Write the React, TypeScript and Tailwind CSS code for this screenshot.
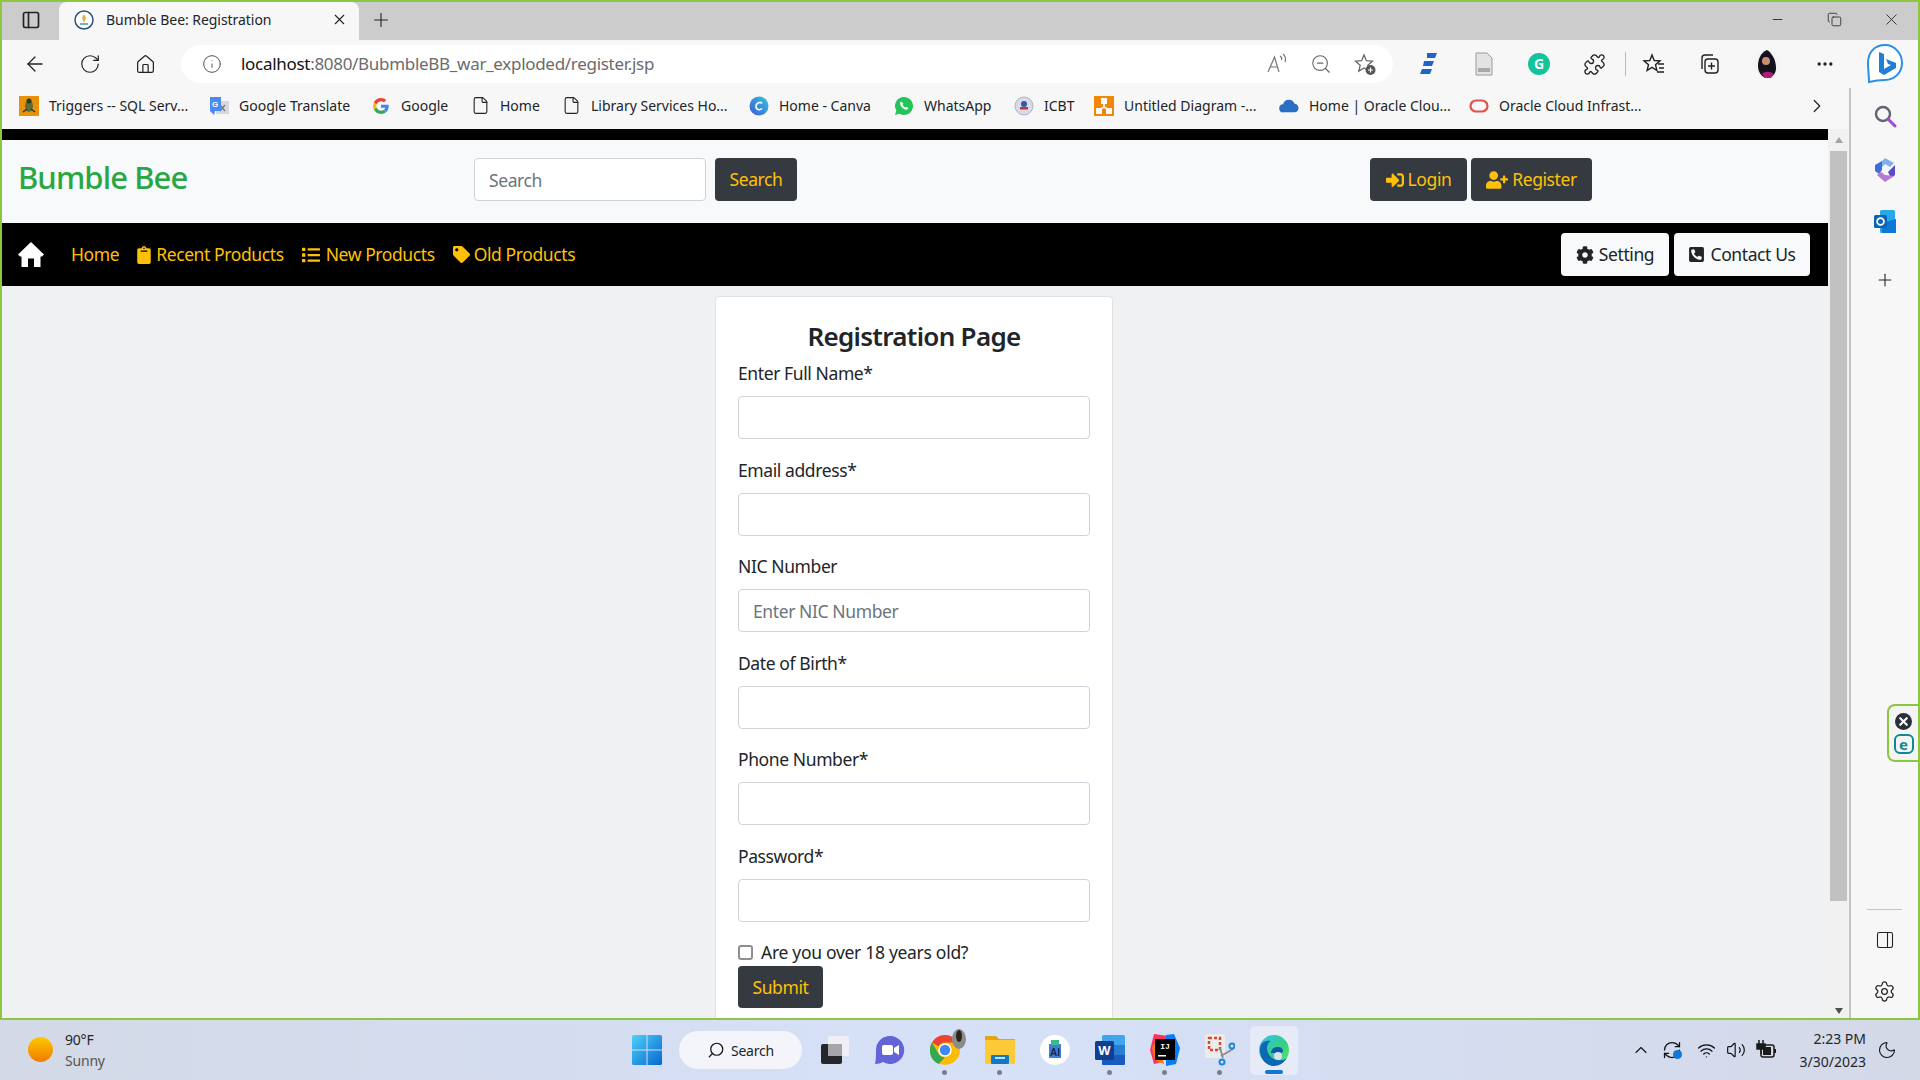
import React from 'react'
import {
  FaClipboard,
  FaList,
  FaTag,
  FaSignInAlt,
  FaUserPlus,
  FaCog,
  FaPhoneSquareAlt,
} from 'react-icons/fa'
import {
  ArrowLeft,
  RotateCw,
  Home,
  Info,
  Search,
  ZoomOut,
  Plus,
  X,
  Minus,
  ChevronRight,
  ChevronUp,
  PanelRight,
  Settings,
  MoreHorizontal,
  Puzzle,
  Wifi,
  Volume2,
  Moon,
  RefreshCw,
  File,
  PanelLeft,
  Copy,
} from 'lucide-react'

const bookmarks = [
  { label: 'Triggers -- SQL Serv...', width: 'w-[190px]', icon: <BugIcon /> },
  { label: 'Google Translate', width: 'w-[162px]', icon: <TranslateIcon /> },
  { label: 'Google', width: 'w-[99px]', icon: <GoogleIcon /> },
  { label: 'Home', width: 'w-[91px]', icon: <File size={19} strokeWidth={1.4} /> },
  { label: 'Library Services Ho...', width: 'w-[188px]', icon: <File size={19} strokeWidth={1.4} /> },
  { label: 'Home - Canva', width: 'w-[145px]', icon: <CanvaIcon /> },
  { label: 'WhatsApp', width: 'w-[120px]', icon: <WhatsAppIcon /> },
  { label: 'ICBT', width: 'w-[80px]', icon: <IcbtIcon /> },
  { label: 'Untitled Diagram -...', width: 'w-[185px]', icon: <DiagramIcon /> },
  { label: 'Home | Oracle Clou...', width: 'w-[190px]', icon: <CloudIcon /> },
  { label: 'Oracle Cloud Infrast...', width: 'w-[170px]', icon: <OracleIcon /> },
]

const fields = [
  { label: 'Enter Full Name*', placeholder: '' },
  { label: 'Email address*', placeholder: '' },
  { label: 'NIC Number', placeholder: 'Enter NIC Number' },
  { label: 'Date of Birth*', placeholder: '' },
  { label: 'Phone Number*', placeholder: '' },
  { label: 'Password*', placeholder: '' },
]

function BugIcon() {
  return (
    <svg width="20" height="20" viewBox="0 0 20 20">
      <rect width="20" height="20" fill="#e8920c" />
      <ellipse cx="10" cy="10" rx="4" ry="6" fill="#5c6b3a" />
      <circle cx="10" cy="5" r="2.5" fill="#2e3a22" />
      <path d="M4 16l4-3M16 16l-4-3" stroke="#2e3a22" strokeWidth="1.5" />
    </svg>
  )
}

function TranslateIcon() {
  return (
    <svg width="20" height="20" viewBox="0 0 20 20">
      <rect x="7" y="5" width="13" height="13" fill="#d5d8dc" />
      <path d="M11 9l5 6M16 9l-5 6" stroke="#70757a" strokeWidth="1.2" />
      <path d="M1 1h11v14H6l-1 4-4-4z" fill="#4a8af4" />
      <text x="6" y="11" fontSize="8" fill="#fff" textAnchor="middle" fontFamily="Liberation Sans" fontWeight="700">G</text>
    </svg>
  )
}

function GoogleIcon() {
  return (
    <svg width="16" height="16" viewBox="0 0 48 48">
      <path fill="#EA4335" d="M24 9.5c3.5 0 6.700 1.200 9.200 3.600l6.900-6.900C35.900 2.400 30.400 0 24 0 14.600 0 6.500 5.400 2.600 13.200l8 6.200C12.500 13.700 17.800 9.500 24 9.500z" />
      <path fill="#4285F4" d="M47 24.500c0-1.600-.1-3.100-.4-4.500H24v9h13c-.6 3-2.300 5.500-4.800 7.200l7.700 6C44.300 38.100 47 31.800 47 24.500z" />
      <path fill="#FBBC05" d="M10.500 28.600c-.5-1.400-.8-3-.8-4.600s.3-3.200.8-4.600l-8-6.200C.9 16.500 0 20.100 0 24s.9 7.500 2.600 10.800z" />
      <path fill="#34A853" d="M24 48c6.500 0 11.900-2.100 15.900-5.800l-7.700-6c-2.200 1.500-5 2.300-8.200 2.300-6.200 0-11.500-4.200-13.400-9.900l-8 6.200C6.500 42.600 14.600 48 24 48z" />
    </svg>
  )
}

function CanvaIcon() {
  return (
    <svg width="20" height="20" viewBox="0 0 20 20">
      <defs>
        <linearGradient id="canva" x1="0" y1="1" x2="1" y2="0">
          <stop offset="0" stopColor="#3a5bd9" />
          <stop offset="1" stopColor="#38c6d9" />
        </linearGradient>
      </defs>
      <circle cx="10" cy="10" r="9.500" fill="url(#canva)" />
      <path d="M13 7.500c-1-2-6-1-6 3 0 3.500 4 4 6 2" fill="none" stroke="#fff" strokeWidth="1.600" />
    </svg>
  )
}

function WhatsAppIcon() {
  return (
    <svg width="20" height="20" viewBox="0 0 20 20">
      <path d="M10 1a9 9 0 00-7.700 13.600L1 19l4.500-1.200A9 9 0 1010 1z" fill="#25c45a" />
      <path d="M7 5.500c-1 .7-1.300 2-.6 3.500 1 2 2.700 3.700 4.700 4.500 1.500.6 2.700 0 3.300-1.200l-2-1.500-1 .8c-1.200-.6-2.200-1.600-2.800-2.800l.8-1z" fill="#fff" />
    </svg>
  )
}

function IcbtIcon() {
  return (
    <svg width="20" height="20" viewBox="0 0 20 20">
      <circle cx="10" cy="10" r="9" fill="#d7dce6" stroke="#a9b3c6" />
      <circle cx="10" cy="8" r="3" fill="#3c55a5" />
      <rect x="6" y="11" width="8" height="2.500" fill="#c8343b" />
    </svg>
  )
}

function DiagramIcon() {
  return (
    <svg width="20" height="20" viewBox="0 0 20 20">
      <rect width="20" height="20" fill="#f08705" />
      <path d="M10 7v4M10 11l-5 3M10 11l5 3" stroke="#fff" strokeWidth="1.500" />
      <rect x="7" y="2" width="6" height="6" fill="#fff" />
      <rect x="2" y="12" width="6" height="6" fill="#fff" />
      <rect x="12" y="12" width="6" height="6" fill="#fff" />
    </svg>
  )
}

function CloudIcon() {
  return (
    <svg width="22" height="16" viewBox="0 0 22 16">
      <path d="M5 15a4.500 4.500 0 01-.5-9A6.500 6.500 0 0117 5.500 4.800 4.800 0 0117.500 15z" fill="#2a6fc4" />
    </svg>
  )
}

function OracleIcon() {
  return (
    <svg width="20" height="14" viewBox="0 0 20 14">
      <rect x="1.500" y="1.500" width="17" height="11" rx="5.500" fill="none" stroke="#e0524a" strokeWidth="2.200" />
    </svg>
  )
}

function HouseIcon() {
  return (
    <svg width="26" height="25" viewBox="0 0 26 25">
      <path d="M13 0L26 12.500 24 14.500H22.500V25H16V16.500H10V25H3.500V14.500H2L0 12.500z" fill="#fff" />
    </svg>
  )
}

function BingIcon() {
  return (
    <svg width="40" height="42" viewBox="0 0 40 42">
      <path d="M20 2C10 2 3 9 3 20c0 6 1 13 1 19 4-1 8-2 16-2 10 0 17-8 17-17S30 2 20 2z" fill="#fff" stroke="#2b8fe8" strokeWidth="2" />
      <path d="M14 9l5 2v15l7-4-3-1-2-5 10 4v5l-12 7-5-3z" fill="#1f7fd6" />
    </svg>
  )
}

function ExtensionE() {
  return (
    <svg width="20" height="24" viewBox="0 0 20 24">
      <path d="M8 1h10l-2 5H8zM5 9h10l-2 5H4zM3 17h10l-2 5H1z" fill="#1f64c8" />
    </svg>
  )
}

function ReaderIcon() {
  return (
    <svg width="20" height="24" viewBox="0 0 20 24">
      <path d="M2 1h11l5 5v17H2z" fill="#e3e3e3" stroke="#9a9a9a" />
      <rect x="4" y="16" width="12" height="4" fill="#a8a8a8" />
    </svg>
  )
}

function GrammarlyIcon() {
  return (
    <div className="flex h-[22px] w-[22px] items-center justify-center rounded-full bg-[#15c39a] text-[14px] font-bold leading-none text-white">
      G
    </div>
  )
}

function FavListIcon() {
  return (
    <svg width="24" height="24" viewBox="0 0 24 24" fill="none" stroke="#222" strokeWidth="1.400">
      <path d="M10 3l2.200 5.500 5.800.4-4.500 3.800 1.400 5.800L10 15.400l-4.900 3.100 1.400-5.800L2 8.900l5.800-.4z" />
      <path d="M16 12h6M17 16h5M15 20h7" />
    </svg>
  )
}

function CollectionsIcon() {
  return (
    <svg width="24" height="24" viewBox="0 0 24 24" fill="none" stroke="#222" strokeWidth="1.400">
      <path d="M5 17V6a3 3 0 013-3h8" />
      <rect x="8" y="7" width="13" height="14" rx="3" />
      <path d="M14.500 10.500v7M11 14h7" />
    </svg>
  )
}

function AvatarIcon() {
  return (
    <svg width="28" height="28" viewBox="0 0 28 28">
      <circle cx="14" cy="14" r="14" fill="#f4f4f4" />
      <path d="M14 0c-7 3-9 10-9 16 0 6 4 12 9 12s9-4 9-10C23 10 19 3 14 0z" fill="#14121c" />
      <circle cx="13" cy="11" r="4" fill="#c98f76" />
      <path d="M9 24c2-3 8-3 12 0l-3 4h-6z" fill="#b01a7a" />
    </svg>
  )
}

function ReadAloudIcon() {
  return (
    <svg width="24" height="24" viewBox="0 0 24 24" fill="none" stroke="#777" strokeWidth="1.200">
      <path d="M3 20L9.500 5 14 20M5.500 15h6.500" />
      <path d="M15 4c1.500 1 2 2.500 1.500 4M18 2c2.500 2 3 5 2 8" />
    </svg>
  )
}

function FavAddIcon() {
  return (
    <svg width="24" height="24" viewBox="0 0 24 24">
      <path d="M11 3l2.400 5.700 6 .5-4.600 4 1.400 5.900L11 16l-5.200 3.100 1.400-5.900-4.600-4 6-.5z" fill="none" stroke="#666" strokeWidth="1.300" />
      <circle cx="17.500" cy="18" r="5" fill="#555" />
      <path d="M17.500 15.500v5M15 18h5" stroke="#fff" strokeWidth="1.200" />
    </svg>
  )
}

function SideSearchIcon() {
  return (
    <svg width="24" height="24" viewBox="0 0 24 24" fill="none">
      <circle cx="10" cy="10" r="7" stroke="#5f6670" strokeWidth="2.400" />
      <path d="M15 15l7 7" stroke="#a24ad0" strokeWidth="3" strokeLinecap="round" />
    </svg>
  )
}

function CopilotIcon() {
  return (
    <svg width="22" height="26" viewBox="0 0 22 26">
      <path d="M11 1l9 5-4 4-5-3-3 3V4z" fill="#7fb0ec" />
      <path d="M1 8l7-4v9l-3 4-4-3z" fill="#3c6fd8" />
      <path d="M21 8v10l-4 3-3-6z" fill="#5a4cc4" />
      <path d="M3 18l8 7 9-6-9-1-4-3z" fill="#b57ad6" />
      <circle cx="11" cy="13" r="3" fill="#f7f7f7" />
    </svg>
  )
}

function OutlookIcon() {
  return (
    <svg width="22" height="26" viewBox="0 0 22 26">
      <rect x="6" y="1" width="15" height="23" rx="1.500" fill="#28a8ea" />
      <path d="M8 14l14-4v14H8z" fill="#0f78d4" />
      <rect x="0" y="6" width="13" height="13" rx="1.500" fill="#0a64b8" />
      <circle cx="6.500" cy="12.500" r="3.400" fill="none" stroke="#fff" strokeWidth="1.800" />
    </svg>
  )
}

function EsetIcon() {
  return (
    <div className="absolute right-0 top-[616px] flex h-[58px] w-[31px] flex-col items-center gap-[4px] rounded-l-[8px] border-2 border-r-0 border-[#8dc63f] bg-[#f4f4f4] pt-[7px]">
      <div className="flex h-[17px] w-[17px] items-center justify-center rounded-full bg-[#2b2f3a]">
        <X size={13} strokeWidth={4} color="#fff" />
      </div>
      <div className="flex h-[20px] w-[20px] items-center justify-center rounded-[6px] border-2 border-[#0f8a94] text-[15px] font-bold leading-none text-[#0f8a94]">
        e
      </div>
    </div>
  )
}

function WinLogo() {
  return (
    <svg width="30" height="30" viewBox="0 0 30 30">
      <defs>
        <linearGradient id="win" x1="0" y1="0" x2="1" y2="1">
          <stop offset="0" stopColor="#4fd0fa" />
          <stop offset="1" stopColor="#0568cf" />
        </linearGradient>
      </defs>
      <path d="M0 1.500A1.500 1.500 0 011.500 0h13v14.500H0zM15.500 0h13A1.500 1.500 0 0130 1.500v13H15.500zM0 15.500h14.500V30h-13A1.500 1.500 0 010 28.500zM15.500 15.500H30v13a1.500 1.500 0 01-1.500 1.500h-13z" fill="url(#win)" />
    </svg>
  )
}

function TaskViewIcon() {
  return (
    <svg width="30" height="30" viewBox="0 0 30 30">
      <rect x="1" y="9" width="21" height="20" rx="2" fill="#26272b" />
      <rect x="8" y="1" width="21" height="20" rx="2" fill="#f2f2f6" fillOpacity="0.9" />
      <rect x="8" y="9" width="14" height="12" fill="#a6a6a8" />
    </svg>
  )
}

function TeamsIcon() {
  return (
    <svg width="30" height="30" viewBox="0 0 30 30">
      <path d="M15 1a14 14 0 00-14 14c0 4 0 10-1 14 3 0 6-1 8-2a14 14 0 107-26z" fill="#6264d8" />
      <rect x="7" y="10" width="11" height="10" rx="2" fill="#fff" />
      <path d="M19 13l5-3v10l-5-3z" fill="#fff" />
    </svg>
  )
}

function ChromeIcon() {
  return (
    <div className="relative">
      <svg width="30" height="30" viewBox="0 0 30 30">
        <circle cx="15" cy="15" r="15" fill="#fbbc05" />
        <path d="M15 0a15 15 0 0113 7.500H15a7.500 7.500 0 00-6.500 3.750L2 7.500A15 15 0 0115 0z" fill="#ea4335" />
        <path d="M2 7.500l6.500 11.250A7.500 7.500 0 0015 22.500L8.500 29A15 15 0 012 7.500z" fill="#34a853" />
        <circle cx="15" cy="15" r="6" fill="#4285f4" stroke="#fff" strokeWidth="1.500" />
      </svg>
      <svg className="absolute -right-[8px] -top-[6px]" width="18" height="20" viewBox="0 0 18 20">
        <ellipse cx="9" cy="10" rx="7" ry="10" fill="#8b8b8b" />
        <ellipse cx="9" cy="7" rx="3" ry="6" fill="#2b2320" />
      </svg>
    </div>
  )
}

function FolderIcon() {
  return (
    <svg width="30" height="30" viewBox="0 0 30 30">
      <path d="M0 2a1 1 0 011-1h10l3 3h15a1 1 0 011 1v3H0z" fill="#e5a50e" />
      <rect y="5" width="30" height="24" rx="1" fill="#fdc936" />
      <rect x="6" y="20" width="18" height="9" rx="1" fill="#0f7ac8" />
      <rect x="10" y="22" width="10" height="2" fill="#bde0f5" />
    </svg>
  )
}

function AiBadgeIcon() {
  return (
    <svg width="30" height="30" viewBox="0 0 30 30">
      <circle cx="15" cy="15" r="15" fill="#fff" />
      <path d="M9 9h12v14H9z" fill="#3f7fd9" />
      <path d="M11 5h8v5h-8z" fill="#3eb98b" />
      <text x="15" y="21" fontSize="10" fill="#16273f" textAnchor="middle" fontFamily="Liberation Sans" fontWeight="700">AI</text>
    </svg>
  )
}

function WordIcon() {
  return (
    <svg width="30" height="30" viewBox="0 0 30 30">
      <rect x="7" y="0" width="23" height="30" rx="1.500" fill="#41a5ee" />
      <rect x="7" y="10" width="23" height="10" fill="#2b7cd3" />
      <path d="M7 20h23v8.500a1.500 1.500 0 01-1.500 1.500h-20A1.500 1.500 0 017 28.500z" fill="#185abd" />
      <rect x="0" y="6" width="19" height="19" rx="1.500" fill="#103f91" />
      <text x="9.500" y="20" fontSize="13" fill="#fff" textAnchor="middle" fontFamily="Liberation Sans" fontWeight="700">W</text>
    </svg>
  )
}

function IntelliJIcon() {
  return (
    <svg width="30" height="32" viewBox="0 0 30 32">
      <path d="M4 0l14 2-6 26-8 2-4-14z" fill="#fe315d" />
      <path d="M16 1l8-1 6 14-4 16-10 2z" fill="#087cfa" />
      <path d="M2 14l6-10 6 26-9-4z" fill="#f97a12" />
      <rect x="5" y="5" width="20" height="21" fill="#000" />
      <text x="15" y="15" fontSize="8" fill="#fff" textAnchor="middle" fontFamily="Liberation Mono" fontWeight="700">IJ</text>
      <rect x="8" y="21" width="8" height="1.500" fill="#fff" />
    </svg>
  )
}

function SnipIcon() {
  return (
    <svg width="30" height="32" viewBox="0 0 30 32">
      <rect x="0" y="0" width="20" height="24" rx="2" fill="#ececec" />
      <rect x="4" y="4" width="11" height="12" fill="none" stroke="#d6482b" strokeWidth="2.500" strokeDasharray="3 2" />
      <path d="M15 14l3 10M28 15l-12 7" stroke="#8a8a8a" strokeWidth="1.800" />
      <circle cx="27" cy="12" r="2.500" fill="none" stroke="#1e88d8" strokeWidth="2" />
      <circle cx="17" cy="28" r="2.500" fill="none" stroke="#1e88d8" strokeWidth="2" />
    </svg>
  )
}

function EdgeIcon() {
  return (
    <svg width="30" height="32" viewBox="0 0 30 32">
      <defs>
        <linearGradient id="edge1" x1="0" y1="0" x2="1" y2="1">
          <stop offset="0" stopColor="#35c1f1" />
          <stop offset="0.600" stopColor="#36d07e" />
          <stop offset="1" stopColor="#66eb6e" />
        </linearGradient>
      </defs>
      <circle cx="15" cy="16" r="15" fill="url(#edge1)" />
      <path d="M1 16C1 8 7 6 12 7c-6 3-5 12 1 17 5 3 11 3 15 0-3 5-8 8-13 8C7 32 1 25 1 16z" fill="#0c67b5" />
      <path d="M12 19c0-4 3-6 7-6 3 0 5 2 5 4 0 1-1 2-3 2h-9z" fill="#0b5aa5" />
      <circle cx="19" cy="22" r="4" fill="#d9e0f2" />
    </svg>
  )
}

function BatteryIcon() {
  return (
    <svg width="20" height="22" viewBox="0 0 20 22">
      <rect x="5" y="6" width="13" height="12" rx="2" fill="none" stroke="#1a1a1a" strokeWidth="1.500" />
      <rect x="7" y="8" width="8" height="8" fill="#1a1a1a" />
      <rect x="18" y="10" width="2" height="4" fill="#1a1a1a" />
      <path d="M3 1v4M7 1v4M1 5h8v5H1zM5 10v5" stroke="#1a1a1a" strokeWidth="1.500" fill="#1a1a1a" />
    </svg>
  )
}

function TaskbarSlot({ children, dot }: { children: React.ReactNode; dot?: boolean }) {
  return (
    <div className="relative flex h-[49px] w-[55px] items-center justify-center">
      {children}
      {dot && <span className="absolute bottom-0 h-[5px] w-[5px] rounded-full bg-[#7b7f88]" />}
    </div>
  )
}

export default function App() {
  return (
    <div className="flex h-[1080px] w-[1920px] flex-col overflow-hidden font-['Noto_Sans',sans-serif] text-[#212529]">
      <div className="flex h-[1020px] flex-col border-2 border-[#8dc63f]">
        {/* tab strip */}
        <div className="flex h-[38px] shrink-0 items-end bg-[#cccccc]">
          <div className="flex h-[38px] w-[57px] items-center justify-center pb-[3px]">
            <PanelLeft size={20} strokeWidth={2} color="#222" />
          </div>
          <div className="flex h-[38px] w-[300px] items-center rounded-t-[8px] bg-[#f7f7f7] pb-[3px] pl-[15px] pr-[11px]">
            <svg width="20" height="20" viewBox="0 0 20 20">
              <circle cx="10" cy="10" r="9" fill="#fff" stroke="#30527a" strokeWidth="1.500" />
              <path d="M10 4l2 4-2 5-2-5z" fill="#d9b53a" />
              <path d="M6 14h8" stroke="#3aa0a8" strokeWidth="1.500" />
            </svg>
            <span className="ml-[12px] flex-1 text-[14px] tracking-[-0.05px]">Bumble Bee: Registration</span>
            <X size={17} strokeWidth={1.6} color="#222" />
          </div>
          <div className="flex h-[38px] w-[44px] items-center justify-center pb-[3px]">
            <Plus size={22} strokeWidth={1.2} color="#222" />
          </div>
          <div className="ml-auto flex h-[38px] items-center pb-[3px] pr-[17px]">
            <Minus size={15} strokeWidth={1.4} color="#222" />
            <Copy size={15} strokeWidth={1.3} color="#222" className="ml-[42px]" />
            <X size={19} strokeWidth={1.1} color="#222" className="ml-[40px]" />
          </div>
        </div>

        {/* toolbar */}
        <div className="flex h-[48px] shrink-0 items-center bg-[#f7f7f7]">
          <div className="flex w-[179px] items-center pl-[21px]">
            <ArrowLeft size={24} strokeWidth={1.3} color="#222" />
            <RotateCw size={22} strokeWidth={1.3} color="#222" className="ml-[32px]" />
            <Home size={21} strokeWidth={1.4} color="#222" className="ml-[34px]" />
          </div>
          <div className="flex h-[38px] w-[1212px] items-center rounded-full bg-white pl-[21px] pr-[16px]">
            <Info size={20} strokeWidth={1.2} color="#555" />
            <div className="ml-[19px] text-[17px] tracking-[-0.3px] text-[#6b6b6b]">
              <span className="text-[#111]">localhost</span>:8080/BubmbleBB_war_exploded/register.jsp
            </div>
            <div className="ml-auto flex items-center gap-[21px]">
              <ReadAloudIcon />
              <ZoomOut size={22} strokeWidth={1.2} color="#666" />
              <FavAddIcon />
            </div>
          </div>
          <div className="flex flex-1 items-center pl-[26px]">
            <ExtensionE />
            <div className="ml-[35px]"><ReaderIcon /></div>
            <div className="ml-[34px]"><GrammarlyIcon /></div>
            <Puzzle size={23} strokeWidth={1.4} color="#222" className="ml-[33px]" />
            <div className="ml-[19px] h-[24px] w-px bg-[#bbb]" />
            <div className="ml-[16px]"><FavListIcon /></div>
            <div className="ml-[31px]"><CollectionsIcon /></div>
            <div className="ml-[32px]"><AvatarIcon /></div>
            <MoreHorizontal size={20} strokeWidth={2} color="#222" className="ml-[34px]" />
            <div className="ml-[30px]"><BingIcon /></div>
          </div>
        </div>

        <div className="flex min-h-0 flex-1">
          <div className="flex min-w-0 flex-1 flex-col">
            {/* bookmarks bar */}
            <div className="flex h-[41px] shrink-0 items-center bg-[#f7f7f7] pb-[6px] pl-[17px] pr-[21px] text-[14px]">
              {bookmarks.map((b) => (
                <div key={b.label} className={`flex shrink-0 items-center ${b.width}`}>
                  <span className="flex w-[20px] shrink-0 justify-center">{b.icon}</span>
                  <span className="ml-[10px] whitespace-nowrap">{b.label}</span>
                </div>
              ))}
              <ChevronRight size={22} strokeWidth={1.3} color="#222" className="ml-auto" />
            </div>

            <div className="flex min-h-0 flex-1">
              <div className="flex min-w-0 flex-1 flex-col bg-[#eff1f3]">
                <div className="h-[11px] shrink-0 bg-black" />

                {/* navbar */}
                <div className="flex h-[83px] shrink-0 items-center bg-[#f8f9fa] pb-[4px] pl-[16px] pr-[236px]">
                  <div className="w-[456px] pb-[4px] text-[31px] font-medium tracking-[-0.9px] text-[#28a745]">Bumble Bee</div>
                  <input
                    placeholder="Search"
                    className="h-[43px] w-[232px] rounded-[4px] border border-[#ced4da] bg-white px-[14px] text-[17.5px] tracking-[-0.4px] outline-none placeholder:text-[#6c757d]"
                  />
                  <button className="ml-[9px] h-[43px] w-[82px] rounded-[4px] bg-[#343a40] text-[17.5px] tracking-[-0.4px] text-[#ffc107]">Search</button>
                  <div className="ml-auto flex gap-[4px]">
                    <button className="flex h-[43px] w-[97px] items-center justify-center gap-[4px] rounded-[4px] bg-[#343a40] text-[17.5px] tracking-[-0.4px] text-[#ffc107]">
                      <FaSignInAlt size={18} />
                      Login
                    </button>
                    <button className="flex h-[43px] w-[121px] items-center justify-center gap-[4px] rounded-[4px] bg-[#343a40] text-[17.5px] tracking-[-0.4px] text-[#ffc107]">
                      <FaUserPlus size={22} />
                      Register
                    </button>
                  </div>
                </div>

                {/* nav links */}
                <div className="flex h-[63px] shrink-0 items-center bg-black pl-[16px] pr-[18px] text-[17.5px] tracking-[-0.4px] text-[#ffc107]">
                  <HouseIcon />
                  <span className="ml-[27px]">Home</span>
                  <span className="ml-[16px] flex items-center gap-[3px]">
                    <FaClipboard size={18} />
                    Recent Products
                  </span>
                  <span className="ml-[18px] flex items-center gap-[6px]">
                    <FaList size={18} />
                    New Products
                  </span>
                  <span className="ml-[18px] flex items-center gap-[4px]">
                    <FaTag size={17} />
                    Old Products
                  </span>
                  <div className="ml-auto flex gap-[5px] text-[#212529]">
                    <button className="flex h-[43px] w-[108px] items-center justify-center gap-[5px] rounded-[4px] bg-[#f8f9fa]">
                      <FaCog size={18} />
                      Setting
                    </button>
                    <button className="flex h-[43px] w-[136px] items-center justify-center gap-[5px] rounded-[4px] bg-[#f8f9fa]">
                      <FaPhoneSquareAlt size={17} />
                      Contact Us
                    </button>
                  </div>
                </div>

                {/* register card */}
                <main className="flex min-h-0 flex-1 justify-center overflow-hidden pr-[2px] pt-[10px]">
                  <div className="h-[760px] w-[398px] shrink-0 rounded-[4px] border border-[#dfe1e3] bg-white px-[22px] pt-[20px]">
                    <h3 className="mb-[5px] text-center text-[26px] font-semibold leading-[38px] tracking-[-0.7px]">Registration Page</h3>
                    {fields.map((f) => (
                      <div key={f.label} className="mb-[17.5px]">
                        <label className="mb-[9px] block text-[17.5px] leading-[27px] tracking-[-0.4px]">{f.label}</label>
                        <input
                          placeholder={f.placeholder}
                          className="block h-[43px] w-full rounded-[4px] border border-[#ced4da] bg-white px-[14px] text-[17.5px] tracking-[-0.4px] outline-none placeholder:text-[#6c757d]"
                        />
                      </div>
                    ))}
                    <div className="flex h-[27px] items-center">
                      <input type="checkbox" className="h-[15px] w-[15px] appearance-none rounded-[3px] border-2 border-[#8f8f8f] bg-white" />
                      <label className="ml-[8px] text-[17.5px] leading-[27px] tracking-[-0.3px]">Are you over 18 years old?</label>
                    </div>
                    <button className="h-[42px] w-[85px] rounded-[4px] bg-[#343a40] text-[17.5px] tracking-[-0.4px] text-[#ffc107]">Submit</button>
                  </div>
                </main>
              </div>

              {/* scrollbar */}
              <div className="flex w-[21px] shrink-0 flex-col items-center bg-[#f1f1f1]">
                <div className="mt-[8px] h-0 w-0 border-x-[4px] border-b-[6px] border-x-transparent border-b-[#a3a3a3]" />
                <div className="mt-[8px] h-[750px] w-[17px] bg-[#c1c1c1]" />
                <div className="mb-[4px] mt-auto h-0 w-0 border-x-[4px] border-t-[6px] border-x-transparent border-t-[#505050]" />
              </div>
            </div>
          </div>

          {/* side panel */}
          <div className="relative flex w-[69px] shrink-0 flex-col items-center border-l-2 border-[#c4c4c4] bg-[#f7f7f7] pt-[16px]">
            <SideSearchIcon />
            <div className="mt-[29px]"><CopilotIcon /></div>
            <div className="mt-[26px]"><OutlookIcon /></div>
            <Plus size={20} strokeWidth={1.3} color="#222" className="mt-[35px]" />
            <EsetIcon />
            <div className="mt-auto h-px w-[35px] bg-[#c4c4c4]" />
            <PanelRight size={20} strokeWidth={1.3} color="#222" className="mt-[20px]" />
            <Settings size={23} strokeWidth={1.3} color="#222" className="mb-[15px] mt-[30px]" />
          </div>
        </div>
      </div>

      {/* taskbar */}
      <div className="relative flex h-[60px] items-center bg-gradient-to-r from-[#d3d9e6] via-[#d6e1f8] to-[#d4d9e8]">
        <div className="absolute left-[28px] top-[17px] h-[25px] w-[25px] rounded-full bg-gradient-to-b from-[#ffc800] to-[#ee7a00]" />
        <div className="ml-[65px] w-[540px] text-[14px] leading-[21px] tracking-[-0.2px]">
          <div>90°F</div>
          <div className="text-[#555]">Sunny</div>
        </div>
        <div className="flex items-center pl-[27px]">
          <WinLogo />
          <div className="ml-[17px] flex h-[38px] w-[123px] items-center justify-center gap-[6px] rounded-full bg-[#f3f5fb] text-[14px] tracking-[-0.2px]">
            <Search size={18} strokeWidth={1.6} color="#111" className="-scale-x-100" />
            Search
          </div>
          <div className="ml-[5px] flex items-center">
            <TaskbarSlot><TaskViewIcon /></TaskbarSlot>
            <TaskbarSlot><TeamsIcon /></TaskbarSlot>
            <TaskbarSlot dot><ChromeIcon /></TaskbarSlot>
            <TaskbarSlot dot><FolderIcon /></TaskbarSlot>
            <TaskbarSlot><AiBadgeIcon /></TaskbarSlot>
            <TaskbarSlot dot><WordIcon /></TaskbarSlot>
            <TaskbarSlot dot><IntelliJIcon /></TaskbarSlot>
            <TaskbarSlot dot><SnipIcon /></TaskbarSlot>
            <div className="relative ml-[3px] flex h-[49px] w-[48px] items-center justify-center rounded-[5px] bg-[#e7ebf7]">
              <EdgeIcon />
              <span className="absolute bottom-[1px] h-[4px] w-[18px] rounded-full bg-[#0f78d4]" />
            </div>
          </div>
        </div>
        <div className="ml-auto flex items-center pr-[23px]">
          <ChevronUp size={20} strokeWidth={1.3} color="#111" />
          <div className="relative ml-[11px]">
            <RefreshCw size={20} strokeWidth={1.5} color="#111" />
            <span className="absolute bottom-[1px] right-0 h-[9px] w-[9px] rounded-full bg-[#0f78d4]" />
          </div>
          <Wifi size={19} strokeWidth={1.6} color="#111" className="ml-[15px]" />
          <Volume2 size={20} strokeWidth={1.4} color="#111" className="ml-[10px]" />
          <div className="ml-[10px]"><BatteryIcon /></div>
          <div className="ml-[24px] text-right text-[14px] leading-[23px]">
            <div>2:23 PM</div>
            <div>3/30/2023</div>
          </div>
          <Moon size={20} strokeWidth={1.3} color="#111" className="ml-[11px]" />
        </div>
      </div>
    </div>
  )
}
